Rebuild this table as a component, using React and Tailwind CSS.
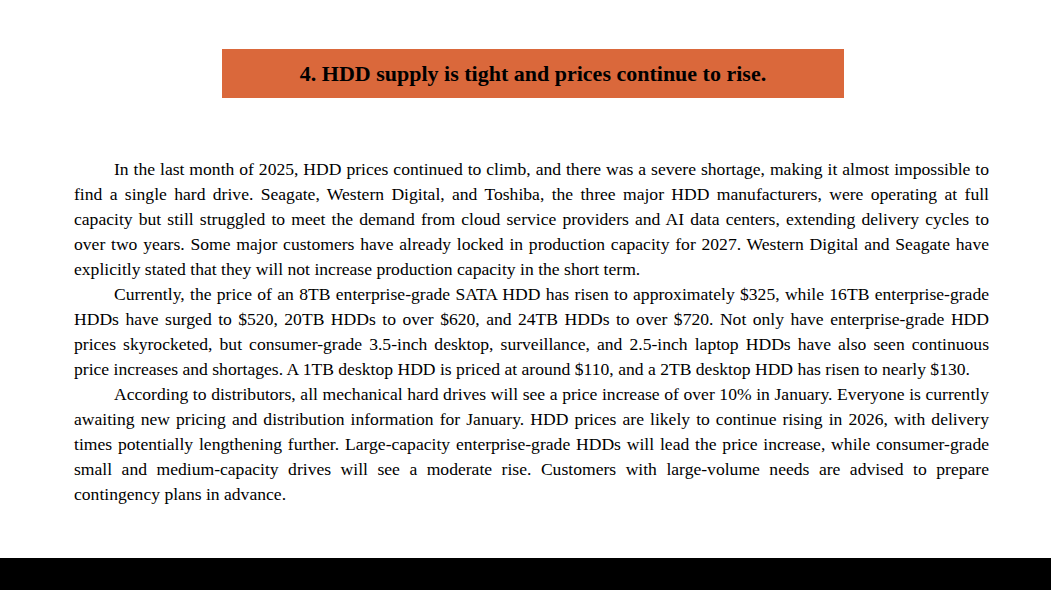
export default function App() {
  return (
    <div className="w-[1051px] h-[590px] flex flex-col bg-black">
      <div className="h-[558px] bg-white pt-[49px]" style={{ fontFamily: '"Liberation Serif", "Times New Roman", serif' }}>
        {/* Title banner */}
        <div className="ml-[222px] w-[622px] h-[49px] bg-[#da683b] flex items-center justify-center">
          <h2 className="text-[22px] font-bold text-black">4. HDD supply is tight and prices continue to rise.</h2>
        </div>

        {/* Article body */}
        <div className="ml-[74px] w-[915px] mt-[59px] text-[17.6px] leading-[25px] text-black text-justify">
          <p className="indent-[40px]">
            In the last month of 2025, HDD prices continued to climb, and there was a severe shortage, making it almost impossible to find a single hard drive. Seagate, Western Digital, and Toshiba, the three major HDD manufacturers, were operating at full capacity but still struggled to meet the demand from cloud service providers and AI data centers, extending delivery cycles to over two years. Some major customers have already locked in production capacity for 2027. Western Digital and Seagate have explicitly stated that they will not increase production capacity in the short term.
          </p>
          <p className="indent-[40px]">
            Currently, the price of an 8TB enterprise-grade SATA HDD has risen to approximately $325, while 16TB enterprise-grade HDDs have surged to $520, 20TB HDDs to over $620, and 24TB HDDs to over $720. Not only have enterprise-grade HDD prices skyrocketed, but consumer-grade 3.5-inch desktop, surveillance, and 2.5-inch laptop HDDs have also seen continuous price increases and shortages. A 1TB desktop HDD is priced at around $110, and a 2TB desktop HDD has risen to nearly $130.
          </p>
          <p className="indent-[40px]">
            According to distributors, all mechanical hard drives will see a price increase of over 10% in January. Everyone is currently awaiting new pricing and distribution information for January. HDD prices are likely to continue rising in 2026, with delivery times potentially lengthening further. Large-capacity enterprise-grade HDDs will lead the price increase, while consumer-grade small and medium-capacity drives will see a moderate rise. Customers with large-volume needs are advised to prepare contingency plans in advance.
          </p>
        </div>
      </div>
    </div>
  );
}
